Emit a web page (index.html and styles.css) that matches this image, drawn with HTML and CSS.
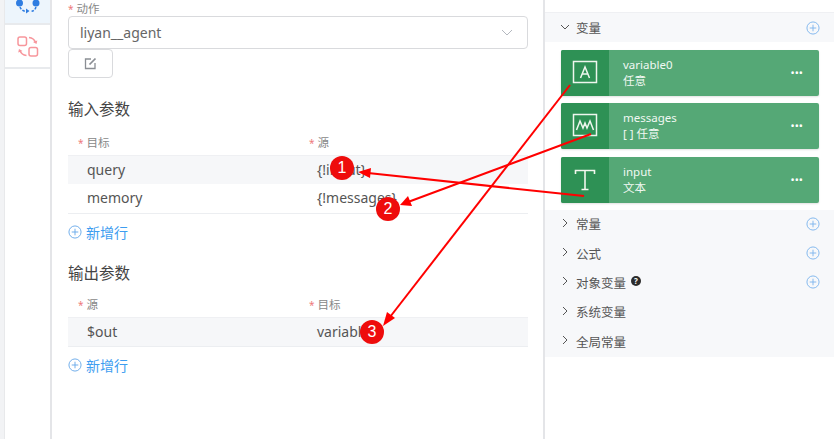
FILE: index.html
```html
<!DOCTYPE html>
<html lang="zh-CN">
<head>
    <meta charset="UTF-8">
    <title>动作参数配置</title>
    <link rel="stylesheet" href="styles.css">
</head>
<body>
    <div class="page">
        <div class="edge"></div>

        <nav class="side-nav">
            <div class="nav-item nav-flow">
                <svg width="28" height="20" viewBox="0 0 28 20" fill="none">
                    <circle cx="5.500" cy="5" r="3.500" fill="#2f7de1"/>
                    <circle cx="22" cy="5" r="3.500" fill="#2f7de1"/>
                    <path d="M6 9c1 3 4 4.500 6 4.500M22 9c-1 3-3 4.500-6 4.500" stroke="#2f7de1" stroke-width="1.500" stroke-dasharray="2.500 1.500"/>
                    <path d="M12 10.500l3.500 2.500-3.500 2.500z" fill="#2f7de1"/>
                </svg>
            </div>
            <div class="nav-item nav-swap">
                <svg width="22" height="21" viewBox="0 0 22 21" fill="none" stroke="#f7969c" stroke-width="1.500">
                    <rect x="1" y="1" width="8.500" height="8.500" rx="2"/>
                    <rect x="12" y="11.500" width="8.500" height="8.500" rx="2"/>
                    <path d="M12 1.500c3 .3 5.500 2 6.500 5"/>
                    <path d="M16 6l3.500 2 .8-3.500z" fill="#f7969c" stroke="none"/>
                    <path d="M9.500 19.500c-3-.3-5.500-2-6.500-5"/>
                    <path d="M5.500 15l-3.500-2-.8 3.500z" fill="#f7969c" stroke="none"/>
                </svg>
            </div>
        </nav>

        <main class="main">
            <div class="field-label"><span class="req">*</span>动作</div>
            <div class="select">
                <span>liyan__agent</span>
                <svg width="12" height="7" viewBox="0 0 12 7" fill="none" stroke="#b4b8bf" stroke-width="1">
                    <path d="M1 1l5 5 5-5"/>
                </svg>
            </div>
            <div class="edit-btn">
                <svg width="13" height="13" viewBox="0 0 13 13" fill="none" stroke="#8a8e94" stroke-width="1.300">
                    <path d="M7 2H1.500v9.500H11V6"/>
                    <path d="M5.500 7.500L11.500 1.500" stroke-width="1.700"/>
                </svg>
            </div>

            <h2 class="section-title first">输入参数</h2>
            <div class="param-head">
                <div><span class="req">*</span>目标</div>
                <div><span class="req">*</span>源</div>
            </div>
            <div class="param-row shaded">
                <div>query</div>
                <div>{!input}</div>
            </div>
            <div class="param-row">
                <div>memory</div>
                <div>{!messages}</div>
            </div>
            <div class="add-row">
                <svg class="plus" width="14" height="14" viewBox="0 0 15 15" fill="none" stroke="#68a9ea">
                    <circle cx="7.500" cy="7.500" r="6.500"/>
                    <path d="M7.500 4v7M4 7.500h7"/>
                </svg>
                新增行
            </div>

            <h2 class="section-title">输出参数</h2>
            <div class="param-head tight">
                <div><span class="req">*</span>源</div>
                <div><span class="req">*</span>目标</div>
            </div>
            <div class="param-row shaded closed">
                <div>$out</div>
                <div>variable0</div>
            </div>
            <div class="add-row">
                <svg class="plus" width="14" height="14" viewBox="0 0 15 15" fill="none" stroke="#68a9ea">
                    <circle cx="7.500" cy="7.500" r="6.500"/>
                    <path d="M7.500 4v7M4 7.500h7"/>
                </svg>
                新增行
            </div>
        </main>

        <aside class="vars">
            <div class="group-head open">
                <svg class="chev" width="10" height="10" viewBox="0 0 10 10" fill="none" stroke="#555">
                    <path d="M1 3l4 4 4-4"/>
                </svg>
                <span class="group-name">变量</span>
                <svg class="plus" width="14" height="14" viewBox="0 0 15 15" fill="none" stroke="#7db5ee">
                    <circle cx="7.500" cy="7.500" r="6.500"/>
                    <path d="M7.500 4v7M4 7.500h7"/>
                </svg>
            </div>

            <div class="cards">
                <div class="var-card">
                    <div class="var-icon">
                        <svg width="26" height="26" viewBox="0 0 26 26" fill="none" stroke="#eef6ee" stroke-width="1.500">
                            <rect x="1.500" y="1.500" width="23" height="21"/>
                            <path d="M8.500 18l4.500-11 4.500 11M10 14h6"/>
                        </svg>
                    </div>
                    <div class="var-text">
                        <div>variable0</div>
                        <div>任意</div>
                    </div>
                    <div class="more">•••</div>
                </div>
                <div class="var-card">
                    <div class="var-icon">
                        <svg width="26" height="26" viewBox="0 0 26 26" fill="none" stroke="#eef6ee" stroke-width="1.500">
                            <rect x="1.500" y="1.500" width="23" height="21"/>
                            <path d="M4.500 17l3.500-9 3 7 2-5 2 5 3-7 3.500 9"/>
                        </svg>
                    </div>
                    <div class="var-text">
                        <div>messages</div>
                        <div>[ ] 任意</div>
                    </div>
                    <div class="more">•••</div>
                </div>
                <div class="var-card">
                    <div class="var-icon">
                        <svg width="24" height="24" viewBox="0 0 24 24" fill="none" stroke="#f2f7ee" stroke-width="1.600">
                            <path d="M2.500 6V2.500h19V6M12 2.500v18.500M8.500 21.500h7"/>
                        </svg>
                    </div>
                    <div class="var-text">
                        <div>input</div>
                        <div>文本</div>
                    </div>
                    <div class="more">•••</div>
                </div>
            </div>

            <div class="group-list">
                <div class="group-head">
                    <svg class="chev" width="10" height="10" viewBox="0 0 10 10" fill="none" stroke="#555"><path d="M3 1l4 4-4 4"/></svg>
                    <span class="group-name">常量</span>
                    <svg class="plus" width="14" height="14" viewBox="0 0 15 15" fill="none" stroke="#7db5ee"><circle cx="7.500" cy="7.500" r="6.500"/><path d="M7.500 4v7M4 7.500h7"/></svg>
                </div>
                <div class="group-head">
                    <svg class="chev" width="10" height="10" viewBox="0 0 10 10" fill="none" stroke="#555"><path d="M3 1l4 4-4 4"/></svg>
                    <span class="group-name">公式</span>
                    <svg class="plus" width="14" height="14" viewBox="0 0 15 15" fill="none" stroke="#7db5ee"><circle cx="7.500" cy="7.500" r="6.500"/><path d="M7.500 4v7M4 7.500h7"/></svg>
                </div>
                <div class="group-head">
                    <svg class="chev" width="10" height="10" viewBox="0 0 10 10" fill="none" stroke="#555"><path d="M3 1l4 4-4 4"/></svg>
                    <span class="group-name">对象变量</span>
                    <span class="hint">?</span>
                    <svg class="plus" width="14" height="14" viewBox="0 0 15 15" fill="none" stroke="#7db5ee"><circle cx="7.500" cy="7.500" r="6.500"/><path d="M7.500 4v7M4 7.500h7"/></svg>
                </div>
                <div class="group-head">
                    <svg class="chev" width="10" height="10" viewBox="0 0 10 10" fill="none" stroke="#555"><path d="M3 1l4 4-4 4"/></svg>
                    <span class="group-name">系统变量</span>
                </div>
                <div class="group-head">
                    <svg class="chev" width="10" height="10" viewBox="0 0 10 10" fill="none" stroke="#555"><path d="M3 1l4 4-4 4"/></svg>
                    <span class="group-name">全局常量</span>
                </div>
            </div>
        </aside>

        <!-- 标注：徽标在下，箭头盖在上面 -->
        <div class="badge badge-1">1</div>
        <div class="badge badge-2">2</div>
        <div class="badge badge-3">3</div>
        <svg class="arrows" width="834" height="439" viewBox="0 0 834 439" fill="#f00" stroke="none">
            <path d="M584 196L368 173" stroke="#f00" stroke-width="2"/>
            <path d="M358 172l13-4-1 10z"/>
            <path d="M591 134L408 202" stroke="#f00" stroke-width="2"/>
            <path d="M400 205l8-9 4 10z"/>
            <path d="M570 85L390 317" stroke="#f00" stroke-width="2"/>
            <path d="M383 326l4-14 8 6z"/>
        </svg>
    </div>
</body>
</html>
```

FILE: styles.css
```css
* {
    box-sizing: border-box;
    margin: 0;
    padding: 0;
}

html, body {
    height: 100%;
    overflow: hidden;
}

body {
    font-family: "Noto Sans", "Noto Sans CJK SC", sans-serif;
    font-size: 13px;
    color: #555;
    background: #fff;
}

.page {
    position: relative;
    display: flex;
    width: 834px;
    height: 439px;
    overflow: hidden;
}

.edge {
    flex: none;
    width: 4px;
    background: #f2f3f5;
}

/* 左侧导航 */
.side-nav {
    flex: none;
    width: 48px;
    border-left: 1px solid #e8e9eb;
    border-right: 2px solid #e4e5e8;
}

.nav-item {
    display: flex;
    justify-content: center;
    border-bottom: 2px solid #e8eaed;
}

.nav-flow {
    height: 25px;
    align-items: flex-end;
    padding-bottom: 5px;
    background: #edf5fc;
}

.nav-swap {
    height: 44px;
    align-items: center;
    padding-top: 1px;
}

/* 中间表单 */
.main {
    flex: none;
    width: 493px;
    padding: 0 15px 0 16px;
    border-right: 2px solid #e4e5e8;
}

.field-label {
    height: 16px;
    font-size: 11.500px;
    line-height: 17px;
    color: #888;
}

.req {
    margin-right: 3px;
    font-size: 10px;
    color: #ee7a7a;
}

.select {
    display: flex;
    align-items: center;
    justify-content: space-between;
    height: 33px;
    padding: 0 14px 0 11px;
    border: 1px solid #d9dadd;
    border-radius: 4px;
    font-size: 14px;
    color: #666;
}

.edit-btn {
    display: flex;
    align-items: center;
    justify-content: center;
    width: 45px;
    height: 29px;
    border: 1px solid #d9dadd;
    border-radius: 4px;
}

.section-title {
    height: 20px;
    margin-top: 13px;
    font-size: 15.500px;
    font-weight: 400;
    line-height: 20px;
    color: #444;
}

.section-title.first {
    margin-top: 21px;
}

.param-head {
    display: grid;
    grid-template-columns: 231px 1fr;
    height: 36px;
    padding: 16px 0 0 10px;
    font-size: 11.500px;
    line-height: 16px;
    color: #888;
}

.param-head.tight {
    height: 34px;
    padding-top: 14px;
}

.param-row {
    display: grid;
    grid-template-columns: 230px 1fr;
    height: 30px;
    padding-left: 19px;
    border-bottom: 1px solid #eceef1;
    font-size: 14px;
    line-height: 28px;
    color: #555;
}

.param-row.shaded {
    height: 29px;
    border-top: 1px solid #eff0f3;
    border-bottom: 0;
    background: #f6f7f9;
}

.param-row.shaded.closed {
    height: 30px;
    border-bottom: 1px solid #eceef1;
}

.add-row {
    display: flex;
    align-items: center;
    gap: 4px;
    height: 36px;
    padding-bottom: 1px;
    font-size: 14px;
    color: #3d9df0;
}

.add-row .plus {
    flex: none;
}

/* 右侧变量面板 */
.vars {
    flex: 1;
    padding-top: 12px;
}

.group-head {
    display: flex;
    align-items: center;
    height: 29.400px;
    padding: 0 14px 2px 15px;
    color: #555;
}

.group-head.open {
    height: 30px;
    padding-bottom: 0;
    border-top: 1px solid #eff0f3;
    background: #f7f8fa;
}

.chev {
    flex: none;
    margin: -2px 6px 0 0;
}

.group-name {
    font-size: 12.500px;
    color: #555;
}

.group-head .plus {
    margin-left: auto;
}

.hint {
    width: 10px;
    height: 10px;
    margin: -3px 0 0 5px;
    border-radius: 50%;
    background: #2b2b2b;
    font-size: 8px;
    font-weight: 700;
    line-height: 10px;
    text-align: center;
    color: #fff;
}

.cards {
    display: flex;
    flex-direction: column;
    gap: 7px;
    padding: 8px 15px 7px 16px;
}

.var-card {
    display: flex;
    align-items: center;
    height: 46px;
    border-radius: 2px;
    background: #55a876;
    box-shadow: 0 1px 2px rgba(0, 0, 0, 0.12);
    color: #f1f8f3;
}

.var-card:last-child {
    margin-top: 1px;
}

.var-icon {
    display: flex;
    align-items: center;
    justify-content: center;
    align-self: stretch;
    width: 48px;
    border-radius: 2px 0 0 2px;
    background: #2e9155;
}

.var-text {
    flex: 1;
    padding-left: 14px;
    font-size: 11.500px;
    line-height: 16px;
}

.more {
    margin-right: 16px;
    font-size: 11px;
    line-height: 16px;
    color: #fff;
}

.group-list {
    background: #f7f8fa;
}

/* 标注 */
.arrows {
    position: absolute;
    top: 0;
    left: 0;
}

.badge {
    position: absolute;
    width: 24px;
    height: 24px;
    border-radius: 50%;
    background: #ee0c0c;
    font-family: "Liberation Sans", sans-serif;
    font-size: 16px;
    line-height: 24px;
    text-align: center;
    color: #fff;
}

.badge-1 {
    top: 156px;
    left: 330px;
}

.badge-2 {
    top: 197px;
    left: 376px;
}

.badge-3 {
    top: 320px;
    left: 360px;
}
```
